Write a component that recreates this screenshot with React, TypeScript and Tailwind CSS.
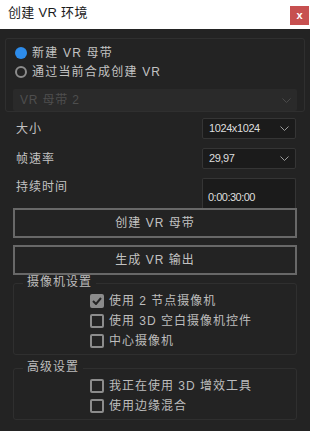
import { useState } from "react";

const font = "font-['Liberation_Sans','Noto_Sans_CJK_SC',sans-serif]";

const Chevron = () => (
    <svg width="9" height="5" viewBox="0 0 9 5" className="shrink-0">
        <polyline points="0.5,0.5 4.5,4.5 8.5,0.5" fill="none" stroke="#9a9a9a" strokeWidth="1" />
    </svg>
);

const Check = ({ checked, label }: { checked: boolean; label: string }) => (
    <div className="flex items-center h-[16px] pl-[76px] gap-[5px]">
        <span
            className={`w-[14px] h-[14px] rounded-[2px] border-2 border-[#8c8c8c] flex items-center justify-center ${checked ? "bg-[#8c8c8c]" : "bg-[#232323]"}`}
        >
            {checked && (
                <svg width="10" height="8" viewBox="0 0 10 8">
                    <polyline points="1,4 4,7 9,1" fill="none" stroke="#262626" strokeWidth="2" />
                </svg>
            )}
        </span>
        <span className="text-[12px] tracking-[1px] text-[#bdbdbd] leading-[16px]">{label}</span>
    </div>
);

const Select = ({ value }: { value: string }) => (
    <div className="w-[94px] h-[21px] bg-[#1b1b1b] border border-[#353535] rounded-[2px] flex items-center justify-between pl-[6px] pr-[6px]">
        <span className="text-[11px] tracking-[-0.4px] text-[#dedede]">{value}</span>
        <Chevron />
    </div>
);

export default function App() {
    const [mode, setMode] = useState<"new" | "comp">("new");

    return (
        <div className={`w-[310px] h-[431px] bg-[#232323] flex flex-col ${font}`}>
            {/* title bar */}
            <div className="h-[29px] bg-white flex items-start justify-between pl-[8px] pr-[1px] shrink-0">
                <span className="text-[13px] text-[#1a1a1a] leading-[29px] -mt-[2px] tracking-[0.3px]">创建 VR 环境</span>
                <button className="mt-[6px] w-[19px] h-[19px] bg-[#c75050] flex items-center justify-center text-white text-[11px] font-bold leading-none pb-[1px]">
                    x
                </button>
            </div>

            <div className="flex flex-col px-[5px] pt-[9px]">
                <div className="border border-[#2f2f2f] rounded-[3px] h-[74px] flex flex-col pt-[4px]">
                    {[
                        { id: "new", label: "新建 VR 母带" },
                        { id: "comp", label: "通过当前合成创建 VR" },
                    ].map((r) => (
                        <div
                            key={r.id}
                            onClick={() => setMode(r.id as any)}
                            className="h-[20px] flex items-center pl-[9px] gap-[5px]"
                        >
                            {mode === r.id ? (
                                <span className="w-[12px] h-[12px] rounded-full bg-[#2d8ceb]" />
                            ) : (
                                <span className="w-[12px] h-[12px] rounded-full border-2 border-[#8c8c8c]" />
                            )}
                            <span className="text-[12px] tracking-[1.2px] text-[#c2c2c2]">{r.label}</span>
                        </div>
                    ))}
                    <div className="mt-[8px] mx-[7px] h-[23px] bg-[#2a2a2a] rounded-[2px] flex items-center justify-between pl-[7px] pr-[6px]">
                        <span className="text-[12px] tracking-[0.8px] text-[#4e4e4e]">VR 母带 2</span>
                        <svg width="9" height="5" viewBox="0 0 9 5">
                            <polyline points="0.5,0.5 4.5,4.5 8.5,0.5" fill="none" stroke="#4a4a4a" strokeWidth="1" />
                        </svg>
                    </div>
                </div>

                <div className="flex flex-col pl-[11px] pr-[9px] mt-[6px] gap-[9px]">
                    <div className="flex items-center justify-between">
                        <span className="text-[12px] tracking-[1px] text-[#c2c2c2]">大小</span>
                        <Select value="1024x1024" />
                    </div>
                    <div className="flex items-center justify-between">
                        <span className="text-[12px] tracking-[1px] text-[#c2c2c2]">帧速率</span>
                        <Select value="29,97" />
                    </div>
                    <div className="flex items-start justify-between h-[30px]">
                        <span className="text-[12px] tracking-[1px] text-[#c2c2c2] leading-[16px] pt-[1px]">持续时间</span>
                        <div className="w-[94px] h-[30px] bg-[#1b1b1b] border border-[#353535] border-b-0 rounded-t-[2px] flex items-end pl-[5px] pb-[4px]">
                            <span className="text-[11px] tracking-[-0.5px] text-[#dedede] leading-[13px]">0:00:30:00</span>
                        </div>
                    </div>
                </div>

                <div className="flex flex-col px-[8px] gap-[7px]">
                    <button className="h-[30px] border-2 border-[#686868] text-[12px] tracking-[1px] text-[#c2c2c2]">
                        创建 VR 母带
                    </button>
                    <button className="h-[30px] border-2 border-[#686868] text-[12px] tracking-[1px] text-[#c2c2c2]">
                        生成 VR 输出
                    </button>

                    <fieldset className="border border-[#2f2f2f] rounded-[3px] pb-[5px] -mt-[8px] flex flex-col gap-[4px]">
                        <legend className="ml-[9px] px-[4px] text-[12px] tracking-[1px] text-[#bdbdbd] leading-[16px] pb-[3px]">
                            摄像机设置
                        </legend>
                        <Check checked label="使用 2 节点摄像机" />
                        <Check checked={false} label="使用 3D 空白摄像机控件" />
                        <Check checked={false} label="中心摄像机" />
                    </fieldset>

                    <fieldset className="border border-[#2f2f2f] rounded-[3px] pb-[5px] -mt-[3px] flex flex-col gap-[4px]">
                        <legend className="ml-[9px] px-[4px] text-[12px] tracking-[1px] text-[#bdbdbd] leading-[16px] pb-[3px]">
                            高级设置
                        </legend>
                        <Check checked={false} label="我正在使用 3D 增效工具" />
                        <Check checked={false} label="使用边缘混合" />
                    </fieldset>
                </div>
            </div>
        </div>
    );
}
